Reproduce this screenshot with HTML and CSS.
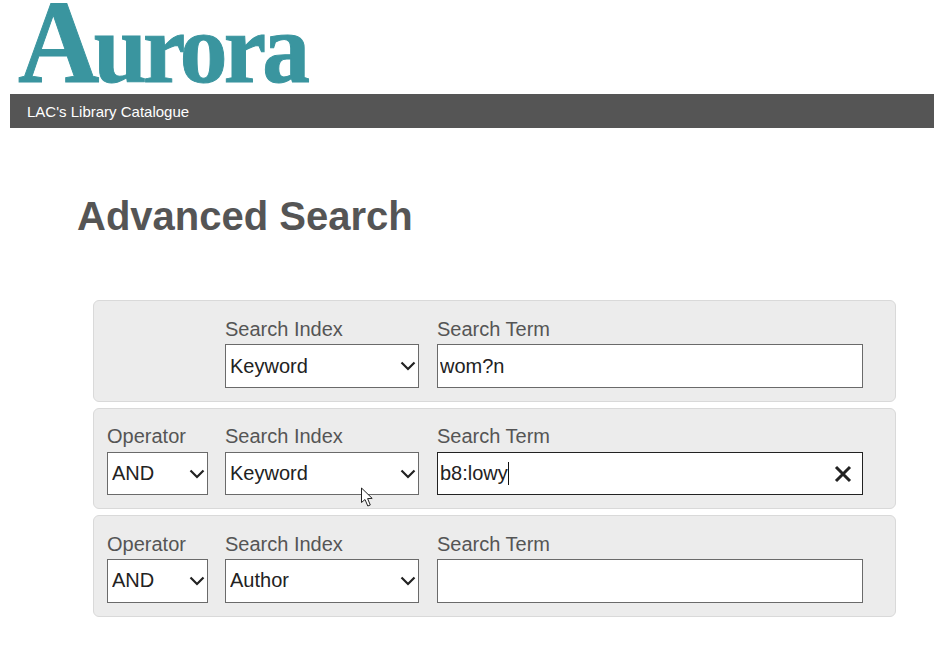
FILE: index.html
```html
<!DOCTYPE html>
<html lang="en">
<head>
<meta charset="utf-8">
<title>Advanced Search</title>
<link rel="stylesheet" href="styles.css">
</head>
<body>
<header class="site-header">
  <div class="logo"><span class="logo-text"><span class="logo-cap">A</span>urora</span></div>
  <div class="subtitle-bar">LAC's Library Catalogue</div>
</header>
<main class="content">
  <h1 class="page-title">Advanced Search</h1>
  <form class="search-form">
    <div class="row">
      <div class="field field-empty"></div>
      <div class="field">
        <label class="field-label">Search Index</label>
        <select class="control select"><option>Keyword</option></select>
      </div>
      <div class="field">
        <label class="field-label">Search Term</label>
        <input class="control input" type="text" value="wom?n">
      </div>
    </div>
    <div class="row row-middle">
      <div class="field">
        <label class="field-label">Operator</label>
        <select class="control select"><option>AND</option></select>
      </div>
      <div class="field">
        <label class="field-label">Search Index</label>
        <select class="control select"><option>Keyword</option></select>
      </div>
      <div class="field">
        <label class="field-label">Search Term</label>
        <div class="input-wrap">
          <input class="control input input-focus" type="text" value="b8:lowy">
          <span class="caret"></span>
          <svg class="clear-icon" viewBox="0 0 18 18" width="18" height="18" aria-hidden="true"><path d="M2 2 L16 16 M16 2 L2 16" fill="none" stroke="#222" stroke-width="3"/></svg>
        </div>
      </div>
    </div>
    <div class="row row-last">
      <div class="field">
        <label class="field-label">Operator</label>
        <select class="control select"><option>AND</option></select>
      </div>
      <div class="field">
        <label class="field-label">Search Index</label>
        <select class="control select"><option>Author</option></select>
      </div>
      <div class="field">
        <label class="field-label">Search Term</label>
        <input class="control input" type="text" value="">
      </div>
    </div>
  </form>
</main>
<svg class="pointer" viewBox="0 0 14 21" width="14" height="21" aria-hidden="true"><path d="M1.5 1 L1.5 15.5 L5 12.5 L7.8 19 L10.3 18 L7.6 11.6 L12.2 11.4 Z" fill="#fff" stroke="#222" stroke-width="1"/></svg>
</body>
</html>
```
FILE: styles.css
```css
* { box-sizing: border-box; }
html, body { margin: 0; padding: 0; }
body {
  padding: 0 7px 0 10px;
  background: #fff;
  font-family: "Liberation Sans", Arial, sans-serif;
  color: #555;
  position: relative;
  height: 645px;
  overflow: hidden;
}
.logo { height: 94px; }
.logo-text {
  display: block;
  width: max-content;
  margin-left: 8px;
  font-family: "Liberation Serif", serif;
  font-weight: 700;
  font-size: 100px;
  line-height: 86px;
  letter-spacing: -4px;
  color: #3a959f;
  -webkit-text-stroke: 1px #3a959f;
  transform: scaleX(0.955);
  transform-origin: 0 0;
}
.logo-cap { font-size: 118px; letter-spacing: -6px; }
.subtitle-bar {
  height: 34px;
  padding-left: 17px;
  background: #555;
  color: #fff;
  font-size: 15px;
  line-height: 36px;
}
.content { padding: 0 38px 0 67px; }
.page-title {
  margin: 0;
  padding-top: 65px;
  height: 172px;
  font-size: 40px;
  line-height: 46px;
  font-weight: 700;
  color: #555;
}
.search-form { margin-left: 16px; display: flex; flex-direction: column; gap: 6px; }
.row {
  display: grid;
  grid-template-columns: 118px 212px 426px;
  height: 102px;
  padding: 16px 0 0 13px;
  background: #ececec;
  border: 1px solid #d9d9d9;
  border-radius: 6px;
}
.row-middle { height: 101px; padding-top: 15px; }
.row-middle .field-label { margin-bottom: 3px; }
.row-last .control { padding-bottom: 2px; }
.field { display: flex; flex-direction: column; }
.field-label { font-size: 20px; line-height: 25px; color: #555; margin-bottom: 2px; }
.control {
  height: 44px;
  border: 1px solid #6a6a6a;
  border-radius: 0;
  background-color: #fff;
  font-family: "Liberation Sans", Arial, sans-serif;
  font-size: 20px;
  color: #222;
  outline: none;
}
.row-middle .control { height: 43px; padding-bottom: 1px; }
.select {
  appearance: none;
  -webkit-appearance: none;
  padding: 0 0 0 4px;
  background-image: url("data:image/svg+xml,%3Csvg xmlns='http://www.w3.org/2000/svg' width='16' height='10'%3E%3Cpath d='M1.5 1.5 L8 8 L14.5 1.5' fill='none' stroke='%23222' stroke-width='2.2'/%3E%3C/svg%3E");
  background-repeat: no-repeat;
  background-position: right 2px center;
}
.field:nth-child(1) .select { width: 101px; }
.field:nth-child(2) .select { width: 194px; }
.input { width: 426px; padding: 0 0 0 2px; }
.input-wrap { position: relative; width: 426px; height: 43px; }
.input-focus { border-color: #222; }
.caret {
  position: absolute;
  left: 71px;
  top: 10px;
  width: 1px;
  height: 23px;
  background: #111;
}
.clear-icon { position: absolute; right: 11px; top: 13px; }
.pointer { position: absolute; left: 360px; top: 487px; }
```
